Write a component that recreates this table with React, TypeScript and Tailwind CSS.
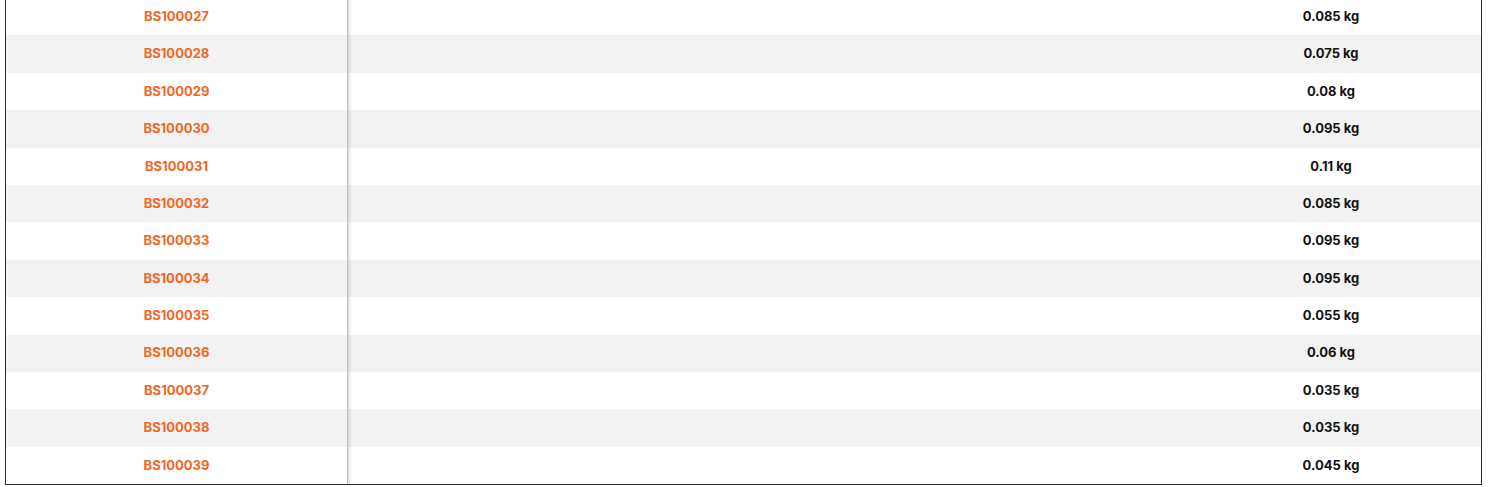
const rows = [
  { sku: "BS100027", weight: "0.085 kg" },
  { sku: "BS100028", weight: "0.075 kg" },
  { sku: "BS100029", weight: "0.08 kg" },
  { sku: "BS100030", weight: "0.095 kg" },
  { sku: "BS100031", weight: "0.11 kg" },
  { sku: "BS100032", weight: "0.085 kg" },
  { sku: "BS100033", weight: "0.095 kg" },
  { sku: "BS100034", weight: "0.095 kg" },
  { sku: "BS100035", weight: "0.055 kg" },
  { sku: "BS100036", weight: "0.06 kg" },
  { sku: "BS100037", weight: "0.035 kg" },
  { sku: "BS100038", weight: "0.035 kg" },
  { sku: "BS100039", weight: "0.045 kg" },
];

export default function App() {
  return (
    <div className="h-[487px] w-[1488px] overflow-hidden bg-white font-['Inter',sans-serif]">
      <div className="mx-[5px] -mt-[2px] w-[1477px] border-x border-b border-[#2b2b2b]">
        {rows.map((row, i) => (
          <div
            key={row.sku}
            className={`flex h-[37.4px] items-center ${i % 2 === 1 ? "bg-[#f2f2f2]" : "bg-white"}`}
          >
            <div className="relative flex h-full w-[342px] shrink-0 items-center justify-center border-r border-[#d8d8d8]">
              <a className="text-[13px] font-bold text-[#f0671f]">{row.sku}</a>
              <span className="absolute inset-y-0 left-full w-[5px] bg-[linear-gradient(to_right,rgba(0,0,0,0.14),rgba(0,0,0,0))]" />
            </div>
            <div className="flex-1" />
            <div className="flex w-[300px] shrink-0 items-center justify-center text-[13px] font-bold text-[#111]">
              {row.weight}
            </div>
          </div>
        ))}
      </div>
    </div>
  );
}
